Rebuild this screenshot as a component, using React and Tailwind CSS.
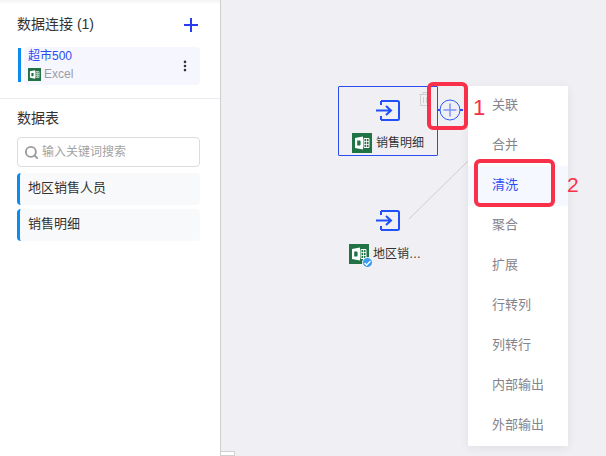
import React from "react";
import { Search, MoreVertical } from "lucide-react";

const font = { fontFamily: '"Liberation Sans", "Noto Sans CJK SC", sans-serif' };

const menuItems = ["关联", "合并", "清洗", "聚合", "扩展", "行转列", "列转行", "内部输出", "外部输出"];

function ExcelIcon({ size = 13 }) {
  return (
    <svg width={size} height={size} viewBox="0 0 20 20" className="block shrink-0">
      <rect width="20" height="20" fill="#217346" />
      <path d="M3 5 L11 3.5 V16.5 L3 15 Z" fill="#fff" />
      <path d="M5.2 7.5 H7.6 C8.2 7.5 8.6 8 8.6 8.5 V11.5 C8.6 12 8.2 12.5 7.6 12.5 H5.2 Z" fill="#217346" />
      <path d="M12 5.5 H17 V14.5 H12 Z" fill="none" stroke="#fff" strokeWidth="1" />
      <path d="M12 8.5 H17 M12 11.5 H17 M14.5 5.5 V14.5" stroke="#fff" strokeWidth="0.8" />
    </svg>
  );
}

function InputIcon() {
  return (
    <svg width="24" height="21" viewBox="0 0 24 21" fill="none" stroke="#1f50fa" strokeWidth="2" className="block">
      <path d="M5 1 H21.5 a1.5 1.5 0 0 1 1.5 1.5 V18.5 a1.5 1.5 0 0 1 -1.5 1.5 H5 M5 1 V5 M5 20 V16" />
      <path d="M0 10.5 H14 M10 6 L15 10.5 L10 15" />
    </svg>
  );
}

function TableRow({ name }) {
  return (
    <div className="h-8 pb-0.5 bg-[#f8f9fb] rounded-sm border-l-[3px] border-[#0a8cf0] pl-2 flex items-center text-[13px] text-[#333]">
      {name}
    </div>
  );
}

export default function App() {
  return (
    <div className="w-[606px] h-[456px] flex overflow-hidden bg-white" style={font}>
      <aside className="w-[221px] h-full shrink-0 bg-white border-r border-[#cfcfcf] flex flex-col">
        <div className="pl-[17px] pr-5 pt-[15px] pb-[13px] bg-gradient-to-b from-[#f3f3f3] to-white to-[4px]">
          <div className="h-[19px] flex items-center justify-between">
            <span className="text-[14px] text-[#333]">数据连接 (1)</span>
            <svg width="14" height="14" viewBox="0 0 14 14" stroke="#2a3cf0" strokeWidth="2" className="mr-0.5 block">
              <path d="M0 7 H14 M7 0 V14" />
            </svg>
          </div>
          <div className="mt-[13px] ml-px flex gap-[3px]">
            <div className="w-[3px] h-[34px] mt-px bg-[#0a8cf0]" />
            <div className="flex-1 h-[38px] rounded-sm bg-[#f6f7fe] pl-1 pr-2 flex items-center justify-between">
              <div>
                <div className="text-[12px] leading-[16px] -mt-px text-[#2a4cf0]">超市500</div>
                <div className="flex items-center gap-[3px] h-[18px] mt-px text-[12px] text-[#9a9ca3]">
                  <ExcelIcon />
                  Excel
                </div>
              </div>
              <MoreVertical size={14} color="#333" strokeWidth={2.5} />
            </div>
          </div>
        </div>
        <div className="border-t border-[#e8ecf1] pl-[17px] pr-5 pt-[10px] flex flex-col">
          <div className="h-[19px] text-[14px] leading-[19px] text-[#333]">数据表</div>
          <div className="mt-[9px] h-[30px] border border-[#dcdcdc] rounded-sm flex items-center pl-[6px] gap-[3px] text-[12px] text-[#a3a3a3]">
            <Search size={15} color="#9a9a9a" strokeWidth={3} />
            输入关键词搜索
          </div>
          <div className="mt-[6px] flex flex-col gap-1">
            <TableRow name="地区销售人员" />
            <TableRow name="销售明细" />
          </div>
        </div>
      </aside>

      <main className="relative flex-1 bg-[#f0f0f4]">
        {/* small corner box at the bottom of the canvas */}
        <div className="absolute -left-px top-[451px] w-[15px] h-[5px] bg-white border border-[#d0d0d0]" />

        {/* link between nodes */}
        <svg className="absolute left-[180px] top-[150px]" width="80" height="80" fill="none">
          <path d="M8 69 L68 10" stroke="#cfcfd2" strokeWidth="1" />
        </svg>

        {/* selected node */}
        <div className="absolute left-[117px] top-[86px] w-[100px] h-[70px] border border-[#2a4cf0] rounded-[1px] flex flex-col items-center">
          <div className="mt-[13px]"><InputIcon /></div>
          <div className="mt-3 flex items-center gap-1 text-[12px] text-[#333]">
            <ExcelIcon size={20} />
            销售明细
          </div>
          <svg className="absolute left-[80px] top-[5px]" width="12" height="14" viewBox="0 0 12 14" fill="none" stroke="#d0d0d2" strokeWidth="1">
            <path d="M0 2.5 H12 M4 2.5 V0.5 H8 V2.5 M1.5 2.5 V13.5 H10.5 V2.5 M4.5 5 V11 M7.5 5 V11" />
          </svg>
        </div>
        <div className="absolute left-[217px] top-[109px] w-[25px] h-[2px] bg-[#2a4cf0]" />
        <svg className="absolute left-[218px] top-[99px]" width="22" height="22" viewBox="0 0 22 22" fill="#f0f0f4" stroke="#2a5cf6">
          <circle cx="11" cy="11" r="10" />
          <path d="M4.5 11 H17.5 M11 4.5 V17.5" stroke="#7c96f8" strokeWidth="1.5" />
        </svg>

        {/* second node */}
        <div className="absolute left-[155px] top-[210px]"><InputIcon /></div>
        <div className="absolute left-[128px] top-[244px] flex items-center gap-[4px] text-[12px] text-[#333]">
          <div className="relative">
            <ExcelIcon size={20} />
            <div className="absolute left-[13px] top-[13px] w-[11px] h-[11px] rounded-full bg-[#3a9af5] border border-white flex items-center justify-center">
              <svg width="7" height="6" viewBox="0 0 7 6" fill="none" stroke="#fff" strokeWidth="1.3">
                <path d="M0.5 3 L2.7 5 L6.5 1" />
              </svg>
            </div>
          </div>
          地区销…
        </div>

        {/* operator menu */}
        <div className="absolute left-[247px] top-[86px] w-[100px] bg-white shadow-[0_2px_10px_rgba(0,0,0,0.07)] flex flex-col">
          {menuItems.map((item) => (
            <div
              key={item}
              className={item === "清洗"
                ? "h-10 pb-0.5 pl-6 flex items-center text-[13px] text-[#2a4cf0] bg-[#f5f8fe]"
                : "h-10 pb-0.5 pl-6 flex items-center text-[13px] text-[#84848c]"}
            >
              {item}
            </div>
          ))}
        </div>

        {/* callouts */}
        <div className="absolute left-[206px] top-[82px] w-[41px] h-[48px] border-[4px] border-[#f8304a] rounded-[6px]" />
        <div className="absolute left-[252px] top-[96px] text-[22px] leading-[24px] text-[#f8304a]">1</div>
        <div className="absolute left-[253px] top-[159px] w-[81px] h-[48px] border-[4px] border-[#f8304a] rounded-[6px]" />
        <div className="absolute left-[346px] top-[173px] text-[21px] leading-[24px] text-[#f8304a]">2</div>
      </main>
    </div>
  );
}
